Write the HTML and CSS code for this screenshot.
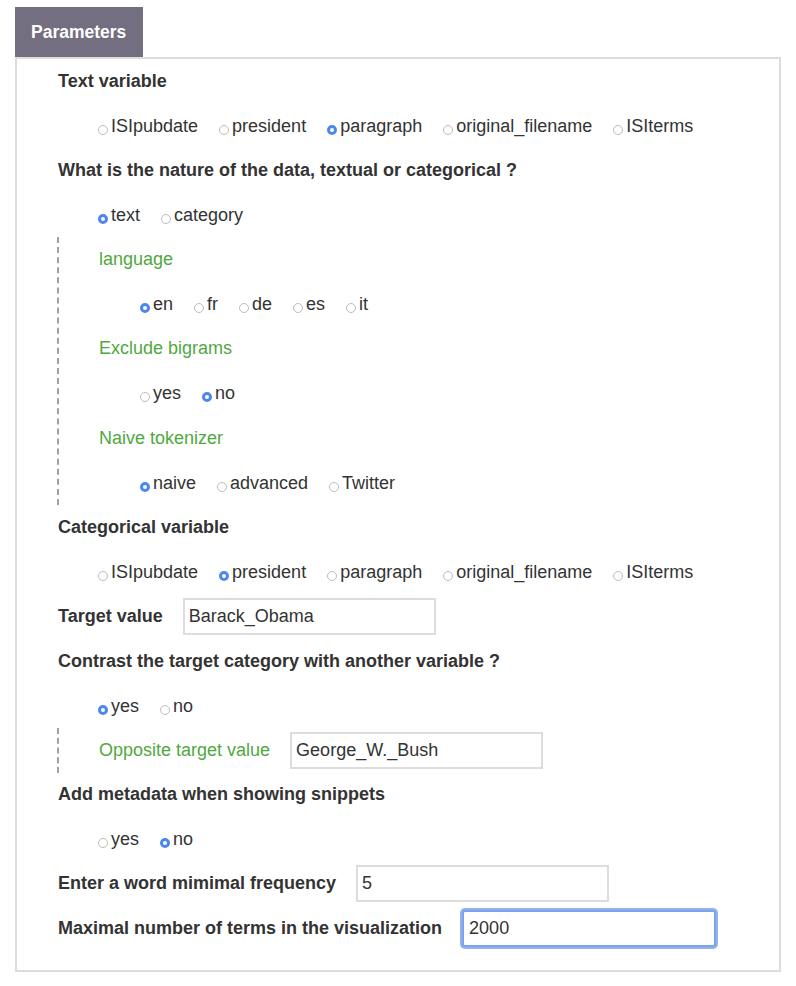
FILE: index.html
```html
<!DOCTYPE html>
<html>
<head>
<meta charset="utf-8">
<link rel="stylesheet" href="styles.css">
</head>
<body>
<div class="tab">Parameters</div>
<div class="box">
  <div class="row label">Text variable</div>
  <div class="row radios">
    <span class="opt"><i class="rb"></i>ISIpubdate</span>
    <span class="opt"><i class="rb"></i>president</span>
    <span class="opt"><i class="rb on"></i>paragraph</span>
    <span class="opt"><i class="rb"></i>original_filename</span>
    <span class="opt"><i class="rb"></i>ISIterms</span>
  </div>
  <div class="row label">What is the nature of the data, textual or categorical ?</div>
  <div class="row radios">
    <span class="opt"><i class="rb on"></i>text</span>
    <span class="opt"><i class="rb"></i>category</span>
  </div>
  <div class="nested">
    <div class="row sublabel">language</div>
    <div class="row radios sub">
      <span class="opt"><i class="rb on"></i>en</span>
      <span class="opt"><i class="rb"></i>fr</span>
      <span class="opt"><i class="rb"></i>de</span>
      <span class="opt"><i class="rb"></i>es</span>
      <span class="opt"><i class="rb"></i>it</span>
    </div>
    <div class="row sublabel">Exclude bigrams</div>
    <div class="row radios sub">
      <span class="opt"><i class="rb"></i>yes</span>
      <span class="opt"><i class="rb on"></i>no</span>
    </div>
    <div class="row sublabel">Naive tokenizer</div>
    <div class="row radios sub">
      <span class="opt"><i class="rb on"></i>naive</span>
      <span class="opt"><i class="rb"></i>advanced</span>
      <span class="opt"><i class="rb"></i>Twitter</span>
    </div>
  </div>
  <div class="row label">Categorical variable</div>
  <div class="row radios">
    <span class="opt"><i class="rb"></i>ISIpubdate</span>
    <span class="opt"><i class="rb on"></i>president</span>
    <span class="opt"><i class="rb"></i>paragraph</span>
    <span class="opt"><i class="rb"></i>original_filename</span>
    <span class="opt"><i class="rb"></i>ISIterms</span>
  </div>
  <div class="row label field"><span>Target value</span><input class="inp" type="text" value="Barack_Obama"></div>
  <div class="row label">Contrast the target category with another variable ?</div>
  <div class="row radios">
    <span class="opt"><i class="rb on"></i>yes</span>
    <span class="opt"><i class="rb"></i>no</span>
  </div>
  <div class="nested">
    <div class="row sublabel field"><span>Opposite target value</span><input class="inp" type="text" value="George_W._Bush"></div>
  </div>
  <div class="row label">Add metadata when showing snippets</div>
  <div class="row radios">
    <span class="opt"><i class="rb"></i>yes</span>
    <span class="opt"><i class="rb on"></i>no</span>
  </div>
  <div class="row label field"><span>Enter a word mimimal frequency</span><input class="inp" type="text" value="5"></div>
  <div class="row label field"><span>Maximal number of terms in the visualization</span><input class="inp focus" type="text" value="2000"></div>
</div>
</body>
</html>
```
FILE: styles.css
```css
* { box-sizing: border-box; }
body {
  margin: 0;
  font-family: "Liberation Sans", Arial, sans-serif;
  font-size: 18px;
  color: #333;
  background: #fff;
}
.tab {
  margin: 7px 0 0 15px;
  width: 128px;
  height: 50px;
  line-height: 51px;
  padding-left: 16px;
  background: #736e80;
  color: #fff;
  font-weight: bold;
  font-size: 17.5px;
}
.box {
  margin-left: 15px;
  width: 766px;
  border: 2px solid #ddd;
  padding: 0 0 19px 41px;
}
.row {
  height: 44.6px;
  display: flex;
  align-items: center;
  white-space: nowrap;
}
.label { font-weight: bold; }
.radios { padding-left: 40px; }
.radios.sub { padding-left: 41px; }
.opt {
  display: inline-block;
  margin-right: 21px;
  line-height: 20px;
}
.rb {
  display: inline-block;
  width: 10px;
  height: 10px;
  border: 1px solid #bdbdbd;
  border-radius: 50%;
  margin-right: 3px;
  vertical-align: -3px;
  background: #fff;
}
.rb.on {
  border: 3px solid #4a87ee;
  background: #fff;
}
.nested {
  margin-left: -1px;
  border-left: 2px dashed #a0a0a0;
  padding-left: 40px;
}
.sublabel { color: #50a83e; }
.field span { margin-right: 20px; }
.inp {
  width: 253px;
  height: 37px;
  border: 2px solid #ddd;
  padding: 0 0 0 4px;
  font-family: "Liberation Sans", Arial, sans-serif;
  font-size: 18px;
  color: #333;
  background: #fff;
  font-weight: normal;
  outline: none;
}
.inp.focus {
  height: 37px;
  width: 254px;
  border: 2px solid #7fa3ea;
  border-radius: 3px;
  box-shadow: 0 0 0 2px #92b3f1;
  padding-left: 5px;
}
```
